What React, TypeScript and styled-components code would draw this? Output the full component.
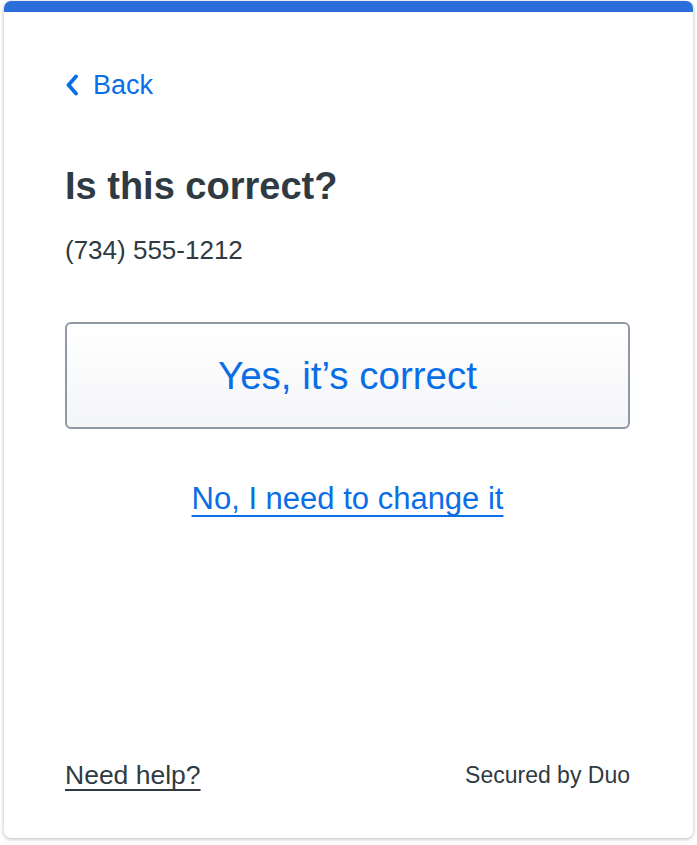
import React from 'react';
import styled, { createGlobalStyle } from 'styled-components';

const GlobalStyle = createGlobalStyle`
    html, body {
        margin: 0;
        padding: 0;
        background: #ffffff;
    }
    body {
        font-family: 'Liberation Sans', Arial, Helvetica, sans-serif;
    }
`;

const Page = styled.div`
    padding: 1px 4px 7px 4px;
`;

const Card = styled.main`
    display: flex;
    flex-direction: column;
    height: 837px;
    box-sizing: border-box;
    background: #fff;
    border-radius: 7px;
    overflow: hidden;
    box-shadow: 0 1px 4px rgba(0, 0, 0, 0.28);
`;

const TopBar = styled.div`
    height: 11px;
    background: #2b6dd9;
    flex-shrink: 0;
`;

const Body = styled.div`
    flex: 1;
    display: flex;
    flex-direction: column;
    padding: 0 63px 0 61px;
`;

const BackLink = styled.a`
    display: flex;
    align-items: center;
    gap: 14px;
    margin-top: 58px;
    color: #0a6ee6;
    font-size: 27px;
    line-height: 30px;
    text-decoration: none;
    cursor: pointer;
    align-self: flex-start;
`;

const Title = styled.h1`
    margin: 66px 0 0 0;
    font-size: 38px;
    line-height: 40px;
    font-weight: 700;
    color: #2f3a42;
`;

const Phone = styled.p`
    margin: 30px 0 0 0;
    font-size: 26px;
    line-height: 28px;
    color: #2f3a42;
`;

const PrimaryButton = styled.button`
    margin-top: 58px;
    height: 107px;
    width: 100%;
    border: 2px solid #8e99a4;
    border-radius: 6px;
    background: linear-gradient(180deg, #ffffff 0%, #f4f5f7 100%);
    color: #0a6ee6;
    font-family: inherit;
    font-size: 38.5px;
    cursor: pointer;
`;

const ChangeLink = styled.a`
    margin-top: 54px;
    align-self: center;
    color: #0a6ee6;
    font-size: 31px;
    line-height: 32px;
    text-decoration: underline;
    text-underline-offset: 6px;
    text-decoration-thickness: 1.5px;
    cursor: pointer;
`;

const Footer = styled.footer`
    margin-top: auto;
    margin-bottom: 49px;
    display: flex;
    justify-content: space-between;
    align-items: center;
`;

const HelpLink = styled.a`
    color: #2f3a42;
    font-size: 26.5px;
    line-height: 28px;
    text-decoration: underline;
    text-underline-offset: 5px;
    text-decoration-thickness: 1.5px;
    cursor: pointer;
`;

const Secured = styled.span`
    color: #2f3a42;
    font-size: 23px;
    line-height: 28px;
`;

// chevron: a bolder stroke than the default, to match the reference
const Chevron = () => (
    <svg width="14" height="22" viewBox="0 0 14 22" fill="none">
        <path d="M11 2.5L3.5 11L11 19.5" stroke="#0a6ee6" strokeWidth="3.8" strokeLinecap="round" strokeLinejoin="round" />
    </svg>
);

export default function App() {
    return (
        <>
            <GlobalStyle />
            <Page>
                <Card>
                    <TopBar />
                    <Body>
                        <BackLink>
                            <Chevron />
                            Back
                        </BackLink>
                        <Title>Is this correct?</Title>
                        <Phone>(734) 555-1212</Phone>
                        <PrimaryButton>Yes, it’s correct</PrimaryButton>
                        <ChangeLink>No, I need to change it</ChangeLink>
                        <Footer>
                            <HelpLink>Need help?</HelpLink>
                            <Secured>Secured by Duo</Secured>
                        </Footer>
                    </Body>
                </Card>
            </Page>
        </>
    );
}
